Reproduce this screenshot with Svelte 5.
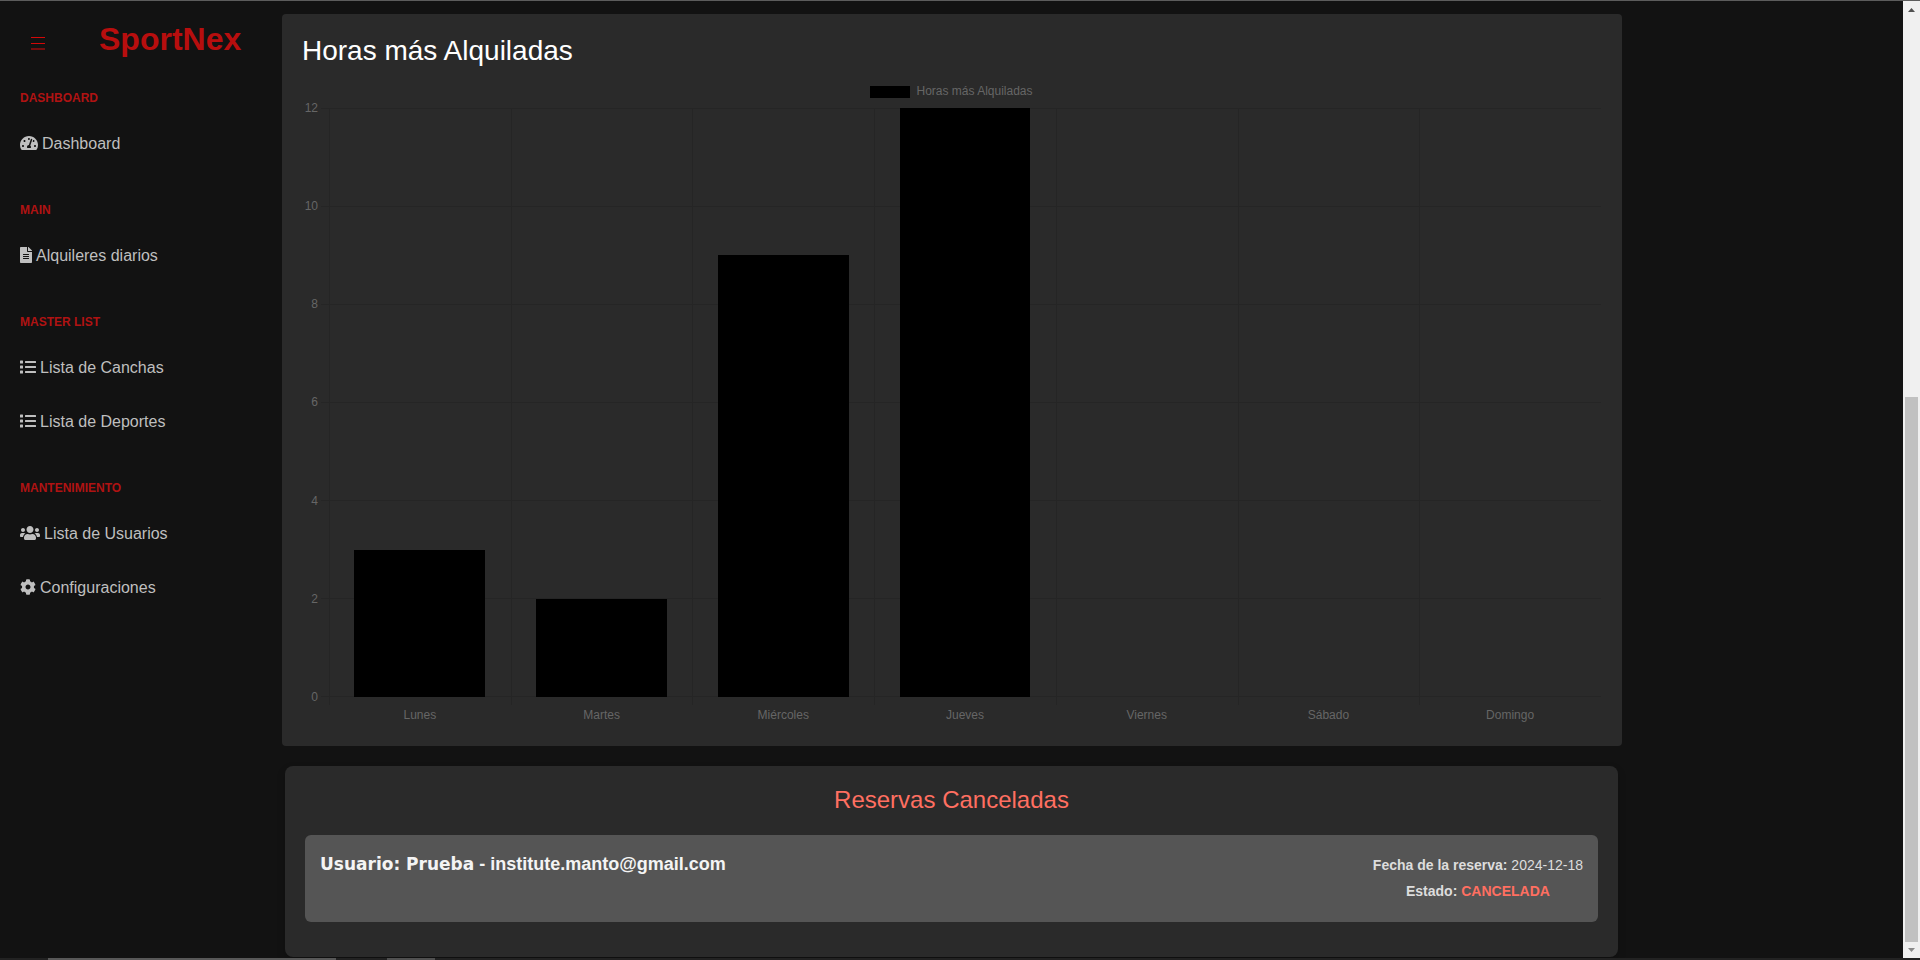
<script>
  const icons = {
    gauge: {
      width: 576,
      path: 'M288 32C128.94 32 0 160.94 0 320c0 52.8 14.25 102.26 39.06 144.8 5.61 9.62 16.3 15.2 27.44 15.2h443c11.14 0 21.83-5.58 27.44-15.2C561.75 422.26 576 372.8 576 320c0-159.06-128.94-288-288-288zm0 64c14.71 0 26.58 10.13 30.32 23.65-1.11 2.26-2.64 4.23-3.45 6.67l-9.22 27.67c-5.13 3.49-10.97 6.01-17.64 6.01-17.67 0-32-14.33-32-32S270.33 96 288 96zM96 384c-17.67 0-32-14.33-32-32s14.33-32 32-32 32 14.33 32 32-14.33 32-32 32zm48-160c-17.67 0-32-14.33-32-32s14.33-32 32-32 32 14.33 32 32-14.33 32-32 32zm246.77-72.41l-61.33 184C343.13 347.33 352 364.54 352 384c0 11.72-3.38 22.55-8.88 32H232.88c-5.5-9.45-8.88-20.28-8.88-32 0-33.94 26.5-61.43 59.9-63.59l61.34-184.01c4.17-12.56 17.73-19.45 30.36-15.17 12.57 4.19 19.35 17.79 15.17 30.36zm14.66 57.2l15.52-46.55c3.47-1.29 7.13-2.23 11.05-2.23 17.67 0 32 14.33 32 32s-14.33 32-32 32c-11.38-.01-20.89-6.28-26.57-15.22zM480 384c-17.67 0-32-14.33-32-32s14.33-32 32-32 32 14.33 32 32-14.33 32-32 32z'
    },
    file: {
      width: 384,
      path: 'M224 136V0H24C10.7 0 0 10.7 0 24v464c0 13.3 10.7 24 24 24h336c13.3 0 24-10.7 24-24V160H248c-13.2 0-24-10.8-24-24zm64 236c0 6.6-5.4 12-12 12H108c-6.6 0-12-5.4-12-12v-8c0-6.6 5.4-12 12-12h168c6.6 0 12 5.4 12 12v8zm0-64c0 6.6-5.4 12-12 12H108c-6.6 0-12-5.4-12-12v-8c0-6.6 5.4-12 12-12h168c6.6 0 12 5.4 12 12v8zm0-72v8c0 6.6-5.4 12-12 12H108c-6.6 0-12-5.4-12-12v-8c0-6.6 5.4-12 12-12h168c6.6 0 12 5.4 12 12zm96-114.1v6.1H256V0h6.1c6.4 0 12.5 2.5 17 7l97.9 98c4.5 4.5 7 10.6 7 16.9z'
    },
    list: {
      width: 512,
      path: 'M80 368H16a16 16 0 0 0-16 16v64a16 16 0 0 0 16 16h64a16 16 0 0 0 16-16v-64a16 16 0 0 0-16-16zm0-320H16A16 16 0 0 0 0 64v64a16 16 0 0 0 16 16h64a16 16 0 0 0 16-16V64a16 16 0 0 0-16-16zm0 160H16a16 16 0 0 0-16 16v64a16 16 0 0 0 16 16h64a16 16 0 0 0 16-16v-64a16 16 0 0 0-16-16zm416 176H176a16 16 0 0 0-16 16v32a16 16 0 0 0 16 16h320a16 16 0 0 0 16-16v-32a16 16 0 0 0-16-16zm0-320H176a16 16 0 0 0-16 16v32a16 16 0 0 0 16 16h320a16 16 0 0 0 16-16V80a16 16 0 0 0-16-16zm0 160H176a16 16 0 0 0-16 16v32a16 16 0 0 0 16 16h320a16 16 0 0 0 16-16v-32a16 16 0 0 0-16-16z'
    },
    users: {
      width: 640,
      path: 'M96 224c35.3 0 64-28.7 64-64s-28.7-64-64-64-64 28.7-64 64 28.7 64 64 64zm448 0c35.3 0 64-28.7 64-64s-28.7-64-64-64-64 28.7-64 64 28.7 64 64 64zm32 32h-64c-17.6 0-33.5 7.1-45.1 18.6 40.3 22.1 68.9 62 75.1 109.4h66c17.7 0 32-14.3 32-32v-32c0-35.3-28.7-64-64-64zm-256 0c61.9 0 112-50.1 112-112S381.9 32 320 32 208 82.1 208 144s50.1 112 112 112zm76.8 32h-8.3c-20.8 10-43.9 16-68.5 16s-47.6-6-68.5-16h-8.3C179.6 288 128 339.6 128 403.2V432c0 26.5 21.5 48 48 48h288c26.5 0 48-21.5 48-48v-28.8c0-63.6-51.6-115.2-115.2-115.2zm-223.7-13.4C161.5 263.1 145.6 256 128 256H64c-35.3 0-64 28.7-64 64v32c0 17.7 14.3 32 32 32h65.9c6.3-47.4 34.9-87.3 75.2-109.4z'
    },
    cog: {
      width: 512,
      path: 'M487.4 315.7l-42.6-24.6c4.3-23.2 4.3-47 0-70.2l42.6-24.6c4.9-2.8 7.1-8.6 5.5-14-11.1-35.6-30-67.8-54.7-94.6-3.8-4.1-10-5.1-14.8-2.3L380.8 110c-17.9-15.4-38.5-27.3-60.8-35.1V25.8c0-5.6-3.9-10.5-9.4-11.7-36.7-8.2-74.3-7.8-109.2 0-5.5 1.2-9.4 6.1-9.4 11.7V75c-22.2 7.9-42.8 19.8-60.8 35.1L88.7 85.5c-4.9-2.8-11-1.9-14.8 2.3-24.7 26.7-43.6 58.9-54.7 94.6-1.7 5.4.6 11.2 5.5 14L67.3 221c-4.3 23.2-4.3 47 0 70.2l-42.6 24.6c-4.9 2.8-7.1 8.6-5.5 14 11.1 35.6 30 67.8 54.7 94.6 3.8 4.1 10 5.1 14.8 2.3l42.6-24.6c17.9 15.4 38.5 27.3 60.8 35.1v49.2c0 5.6 3.9 10.5 9.4 11.7 36.7 8.2 74.3 7.8 109.2 0 5.5-1.2 9.4-6.1 9.4-11.7v-49.2c22.2-7.9 42.8-19.8 60.8-35.1l42.6 24.6c4.9 2.8 11 1.9 14.8-2.3 24.7-26.7 43.6-58.9 54.7-94.6 1.5-5.5-.7-11.3-5.6-14.1zM256 336c-44.1 0-80-35.9-80-80s35.9-80 80-80 80 35.9 80 80-35.9 80-80 80z'
    }
  };

  const sections = [
    { title: 'DASHBOARD', items: [{ icon: icons.gauge, label: 'Dashboard' }] },
    { title: 'MAIN', items: [{ icon: icons.file, label: 'Alquileres diarios' }] },
    {
      title: 'MASTER LIST',
      items: [
        { icon: icons.list, label: 'Lista de Canchas' },
        { icon: icons.list, label: 'Lista de Deportes' }
      ]
    },
    {
      title: 'MANTENIMIENTO',
      items: [
        { icon: icons.users, label: 'Lista de Usuarios' },
        { icon: icons.cog, label: 'Configuraciones' }
      ]
    }
  ];

  const max = 12;
  const ticks = [12, 10, 8, 6, 4, 2, 0];
  const days = [
    { name: 'Lunes', hours: 3 },
    { name: 'Martes', hours: 2 },
    { name: 'Miércoles', hours: 9 },
    { name: 'Jueves', hours: 12 },
    { name: 'Viernes', hours: 0 },
    { name: 'Sábado', hours: 0 },
    { name: 'Domingo', hours: 0 }
  ];
</script>

<div class="window">
  <div class="page">
    <aside class="sidebar">
      <header class="brand">
        <button class="toggle" type="button" aria-label="Menú">
          <svg width="14" height="14" viewBox="0 0 14 14" aria-hidden="true">
            <path d="M0 .5h14M0 6.5h14M0 12h14" stroke="currentColor" stroke-width="1.2" />
          </svg>
        </button>
        <h1>SportNex</h1>
      </header>
      <nav>
        {#each sections as section}
          <h2>{section.title}</h2>
          <ul>
            {#each section.items as item}
              <li>
                <a href="#top">
                  <svg
                    width={item.icon.width / 32}
                    height="16"
                    viewBox="0 0 {item.icon.width} 512"
                    aria-hidden="true"><path d={item.icon.path} fill="currentColor" /></svg>
                  <span>{item.label}</span>
                </a>
              </li>
            {/each}
          </ul>
        {/each}
      </nav>
    </aside>

    <main>
      <section class="card chart-card">
        <h3>Horas más Alquiladas</h3>
        <div class="chart">
          <div class="legend"><i></i><span>Horas más Alquiladas</span></div>
          <div class="y-axis">
            {#each ticks as tick}<span>{tick}</span>{/each}
          </div>
          <div class="plot">
            <div class="rows">
              {#each ticks.slice(1) as tick}<i></i>{/each}
            </div>
            <div class="columns">
              {#each days as day}
                <div class="column">
                  {#if day.hours}
                    <div class="bar" style="height: {(day.hours / max) * 100}%"></div>
                  {/if}
                </div>
              {/each}
            </div>
          </div>
          <div class="x-axis">
            {#each days as day}<span>{day.name}</span>{/each}
          </div>
        </div>
      </section>

      <section class="card cancelled">
        <h4>Reservas Canceladas</h4>
        <article>
          <h5><strong>Usuario: Prueba</strong> - institute.manto@gmail.com</h5>
          <div class="details">
            <p><b>Fecha de la reserva:</b> 2024-12-18</p>
            <p><b>Estado: <em>CANCELADA</em></b></p>
          </div>
        </article>
      </section>
    </main>

    <div class="scrollbar" aria-hidden="true">
      <svg width="7" height="4" viewBox="0 0 7 4"><path d="M0 4 3.5 0 7 4z" fill="#505050" /></svg>
      <div class="track"><div class="thumb"></div></div>
      <svg width="7" height="4" viewBox="0 0 7 4"><path d="M0 0 3.5 4 7 0z" fill="#8a8a8a" /></svg>
    </div>
  </div>
  <div class="taskbar" aria-hidden="true"><i class="wide"></i><i class="small"></i></div>
</div>

<style>
  :global(body) {
    margin: 0;
    background: #121212;
  }

  .window {
    display: flex;
    flex-direction: column;
    box-sizing: border-box;
    min-height: 100vh;
    border-top: 1px solid #5c5c5c;
    background: #121212;
    color: #fff;
    font-family: "Liberation Sans", Arial, sans-serif;
    font-size: 16px;
    line-height: 24px;
  }

  .page {
    flex: 1;
    display: grid;
    grid-template-columns: 282px minmax(0, 1fr) 17px;
  }

  h1, h2, h3, h4, h5, p, ul {
    margin: 0;
    padding: 0;
  }

  .brand {
    display: flex;
    align-items: flex-start;
    gap: 54px;
    box-sizing: border-box;
    height: 58px;
    padding: 20px 0 0 31px;
    color: #b80e0e;
  }

  .toggle {
    display: flex;
    margin-top: 16px;
    padding: 0;
    border: 0;
    background: none;
    color: #d40808;
    cursor: pointer;
  }

  h1 {
    font-size: 32px;
    line-height: 37px;
  }

  nav h2 {
    padding: 30px 20px 10px;
    color: #b01212;
    font-size: 12px;
    line-height: 18px;
  }

  ul {
    list-style: none;
  }

  nav a {
    display: flex;
    align-items: center;
    gap: 4px;
    padding: 15px 20px;
    color: #bfbfbf;
    text-decoration: none;
  }

  nav svg {
    margin-bottom: 2px;
  }

  main {
    display: flex;
    flex-direction: column;
    gap: 20px;
    padding: 13px 281px 0 0;
  }

  .card {
    padding: 20px;
    background: #2a2a2a;
  }

  .chart-card {
    border-radius: 4px;
  }

  h3 {
    margin-bottom: 8px;
    font-size: 28px;
    font-weight: 400;
    line-height: 34px;
  }

  .chart {
    display: grid;
    grid-template-columns: 27px minmax(0, 1fr);
    grid-template-rows: 32px minmax(0, 1fr) 29px;
    box-sizing: border-box;
    aspect-ratio: 2;
    padding-right: 1px;
    color: #666;
    font-size: 12px;
    line-height: 14px;
  }

  .legend {
    grid-column: 1 / -1;
    display: flex;
    justify-content: center;
    align-items: flex-end;
    gap: 6px;
    height: 12px;
    padding-top: 10px;
  }

  .legend i {
    width: 40px;
    height: 12px;
    background: #000;
  }

  .y-axis {
    display: flex;
    flex-direction: column;
    justify-content: space-between;
    padding-right: 11px;
  }

  .y-axis span {
    display: flex;
    justify-content: flex-end;
    align-items: center;
    height: 0;
  }

  .plot {
    display: grid;
  }

  .rows,
  .columns {
    grid-area: 1 / 1;
  }

  .rows {
    display: flex;
    flex-direction: column;
    margin-left: -8px;
    border-bottom: 1px solid #252525;
  }

  .rows i {
    flex: 1;
    border-top: 1px solid #252525;
  }

  .columns {
    display: grid;
    grid-template-columns: repeat(7, 1fr);
    margin-bottom: -8px;
  }

  .column {
    display: flex;
    align-items: flex-end;
    justify-content: center;
    padding-bottom: 8px;
    box-shadow: inset 1px 0 #252525;
  }

  .bar {
    width: 72%;
    background: #000;
  }

  .x-axis {
    grid-column: 2;
    display: grid;
    grid-template-columns: repeat(7, 1fr);
    padding-top: 11px;
    text-align: center;
  }

  .cancelled {
    margin: 0 4px 0 3px;
    padding-bottom: 35px;
    border-radius: 8px;
    box-shadow: 0 4px 8px rgba(0, 0, 0, 0.2);
  }

  h4 {
    margin-bottom: 21px;
    color: #ff6f61;
    font-size: 24px;
    font-weight: 400;
    line-height: 28px;
    text-align: center;
  }

  article {
    display: flex;
    justify-content: space-between;
    padding: 17px 15px;
    border-radius: 6px;
    background: #555;
  }

  h5 {
    color: #f4f4f4;
    font-size: 18px;
    line-height: 24px;
  }

  h5 strong {
    font-family: "Arial Black", "DejaVu Sans", sans-serif;
    font-size: 17px;
    font-weight: 900;
  }

  .details {
    display: flex;
    flex-direction: column;
    gap: 5px;
    padding: 3px 0;
    color: #ddd;
    font-size: 14px;
    line-height: 21px;
    text-align: center;
  }

  em {
    color: #ff6f61;
    font-style: normal;
  }

  .scrollbar {
    display: flex;
    flex-direction: column;
    align-items: center;
    gap: 6px;
    padding: 7px 2px 6px;
    background: #f0f0f0;
  }

  .track {
    flex: 1;
    display: flex;
    align-items: flex-end;
    width: 100%;
  }

  .thumb {
    width: 100%;
    height: 59%;
    background: #c1c1c1;
  }

  .taskbar {
    display: flex;
    height: 2px;
    padding-left: 48px;
    gap: 51px;
    background: #222;
  }

  .taskbar .wide {
    width: 288px;
    background: #585858;
  }

  .taskbar .small {
    width: 48px;
    background: #505050;
  }
</style>
